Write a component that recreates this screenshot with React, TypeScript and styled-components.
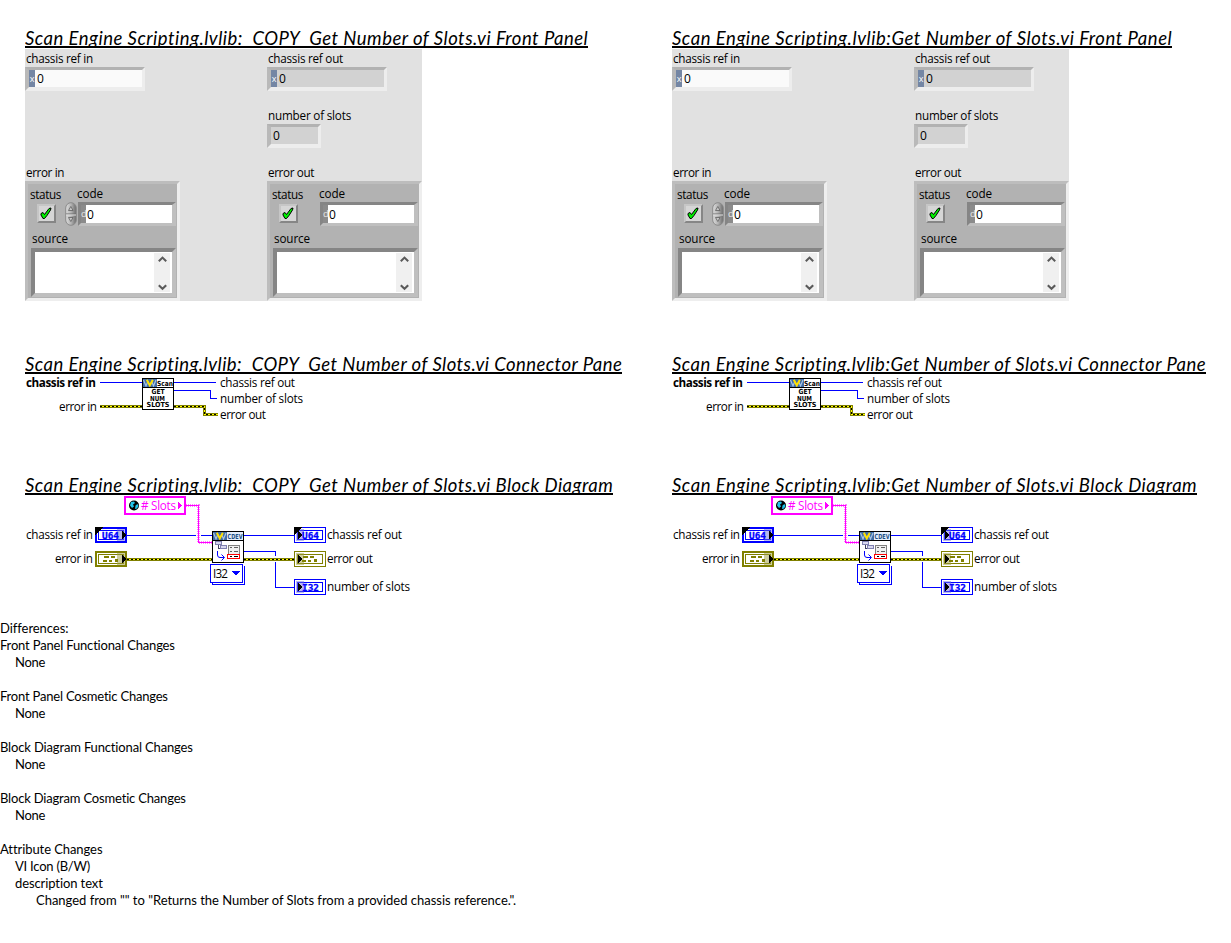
import React, { useLayoutEffect, useRef, useState } from "react";
import styled, { createGlobalStyle } from "styled-components";

const UI = '"Open Sans", "Noto Sans", sans-serif';
const DOC = 'Lato, "Open Sans", sans-serif';
const BLUE = "#0000ff";
const OLIVE = "#808000";
const PINK = "#ff00ff";

const GlobalStyle = createGlobalStyle`
  body { margin: 0; background: #fff; color: #000; }
  * { box-sizing: border-box; }
`;

const Page = styled.main`
  width: 1231px;
  height: 943px;
  overflow: hidden;
  background: #fff;
`;

const Columns = styled.div`
  display: grid;
  grid-template-columns: 647px 559px;
  padding: 27px 0 0 25px;
  height: 620px;
`;

const Section = styled.section<{ $height: number }>`
  height: ${(p) => p.$height}px;
`;

const Heading = styled.h2<{ $width: number }>`
  margin: 0 0 1px;
  width: ${(p) => p.$width}px;
  height: 21px;
  border-bottom: 2px solid #000;
  overflow: hidden;
  font: italic 400 18.5px/22px ${DOC};
`;

const Run = styled.span`
  display: inline-block;
  white-space: pre;
`;

/* Text whose tracking is adjusted so that it spans a given width. */
function FitText({ width, children }: { width: number; children: string }) {
  const ref = useRef<HTMLSpanElement>(null);
  const [spacing, setSpacing] = useState(0);
  useLayoutEffect(() => {
    if (ref.current) {
      const natural = ref.current.getBoundingClientRect().width;
      setSpacing((width - natural) / children.length);
    }
  }, [width, children]);
  return (
    <Run ref={ref} style={{ letterSpacing: `${spacing}px` }}>
      {children}
    </Run>
  );
}

/* ---------- Front panel ---------- */

const Panel = styled.div`
  display: grid;
  grid-template-columns: 242px 155px;
  width: 397px;
  height: 252px;
  background: #e1e1e1;
`;

const PanelColumn = styled.div`
  display: flex;
  flex-direction: column;
`;

const Label = styled.div`
  height: 18px;
  padding-left: 1px;
  font: 11.7px/18px ${UI};
`;

const Gap = styled.div<{ $size: number }>`
  height: ${(p) => p.$size}px;
`;

const Field = styled.div<{ $width: number; $indicator?: boolean }>`
  display: flex;
  width: ${(p) => p.$width}px;
  height: 24px;
  border-style: solid;
  border-width: 3px 3px 4px 4px;
  border-color: #b2b2b2 #ededed #ededed #b9b9b9;
  background: ${(p) => (p.$indicator ? "#d2d2d2" : "#fafafa")};
  font: 12px/17px ${UI};
`;

const Radix = styled.span`
  width: 6px;
  margin-right: 2px;
  background: #7486a4;
  color: #fff;
  font: 9px/18px ${UI};
  text-align: center;
`;

const Digit = styled.span<{ $pad?: number }>`
  padding-left: ${(p) => p.$pad ?? 0}px;
`;

const Cluster = styled.div`
  width: 155px;
  height: 120px;
  border: 3px solid;
  border-color: #bdbdbd #eeeeee #eeeeee #bdbdbd;
  background: #b2b2b2;
`;

const ClusterLabels = styled.div`
  display: grid;
  grid-template-columns: 47px 1fr;
  padding-left: 2px;
  height: 18px;
  font: 11.7px/18px ${UI};
`;

const StatusText = styled.span`
  padding-top: 1px;
`;

const CodeText = styled.span`
  white-space: nowrap;
`;

const ControlRow = styled.div`
  display: flex;
  align-items: center;
  height: 24px;
  padding-left: 9px;
`;

const StatusButton = styled.div`
  display: flex;
  width: 19px;
  height: 19px;
  margin: 0 9px 2px 0;
  border: 2px solid;
  border-color: #c6c6c6 #868686 #868686 #c6c6c6;
  background: #d6d6d6;
`;

const SpinnerSlot = styled.div`
  display: flex;
  width: 13px;
  height: 24px;
`;

const CodeField = styled.div`
  display: flex;
  width: 98px;
  height: 24px;
  border-style: solid;
  border-width: 3px 4px 3px 3px;
  border-color: #858585 #bfbfbf #bfbfbf #858585;
  background: #fff;
  font: 12px/19px ${UI};
`;

const Decimal = styled.span`
  width: 5px;
  background: #8b8b8b;
  color: #e8e8e8;
  font: 9.5px/18px ${UI};
`;

const SourceLabel = styled.div`
  height: 22px;
  padding-left: 4px;
  font: 11.7px/25px ${UI};
`;

const SourceBox = styled.div`
  display: flex;
  justify-content: flex-end;
  width: 145px;
  height: 49px;
  margin-left: 3px;
  padding: 1px 2px 1px 0;
  border: 4px solid;
  border-color: #858585 #bfbfbf #bfbfbf #858585;
  background: #fff;
`;

const ScrollBar = styled.div`
  display: flex;
  flex-direction: column;
  justify-content: space-between;
  align-items: center;
  width: 16px;
  padding: 3px 0 1px;
  background: #f0f0f0;
`;

const Chevron = ({ down }: { down?: boolean }) => (
  <svg width="9" height="7" viewBox="0 0 9 7">
    <path
      d={down ? "M0.8 1.2 4.5 4.8 8.2 1.2" : "M0.8 5.2 4.5 1.6 8.2 5.2"}
      fill="none"
      stroke="#5a5a5a"
      strokeWidth="2.1"
    />
  </svg>
);

const Check = () => (
  <svg width="15" height="15" viewBox="0.5 0 15 15">
    <path
      d="M2.5 7.5 4.5 6.5 6 8.5 10.5 2.5 12.5 2 12 4 8.5 9.5 6 12.5 4.5 12.5 2.5 9Z"
      fill="#00f000"
      stroke="#000"
      strokeWidth="1"
    />
  </svg>
);

const Spinner = () => (
  <svg width="12" height="24" viewBox="0 0 12 24">
    <defs>
      <linearGradient id="metal" x1="0" x2="1">
        <stop offset="0" stopColor="#dcdcdc" />
        <stop offset="0.5" stopColor="#b4b4b4" />
        <stop offset="1" stopColor="#6a6a6a" />
      </linearGradient>
    </defs>
    <rect x="0.7" y="0.7" width="10.6" height="22.6" rx="5.3" fill="url(#metal)" stroke="#8a8a8a" />
    <path d="M1 12h10" stroke="#707070" />
    <path d="M1 13h10" stroke="#e0e0e0" />
    <path d="M3.5 8.5 5.8 4.5 8 8.5Z" fill="#c8c8c8" stroke="#606060" strokeWidth="0.8" />
    <path d="M3.5 15.5 5.8 19.5 8 15.5Z" fill="#c8c8c8" stroke="#606060" strokeWidth="0.8" />
  </svg>
);

function ErrorCluster({ control }: { control?: boolean }) {
  return (
    <Cluster>
      <ClusterLabels>
        <StatusText>
          <FitText width={31}>status</FitText>
        </StatusText>
        <CodeText>
          <FitText width={26}>code</FitText>
        </CodeText>
      </ClusterLabels>
      <ControlRow>
        <StatusButton>
          <Check />
        </StatusButton>
        <SpinnerSlot>{control && <Spinner />}</SpinnerSlot>
        <CodeField>
          <Decimal>d</Decimal>
          <Digit $pad={1}>0</Digit>
        </CodeField>
      </ControlRow>
      <SourceLabel>
        <FitText width={36}>source</FitText>
      </SourceLabel>
      <SourceBox>
        <ScrollBar>
          <Chevron />
          <Chevron down />
        </ScrollBar>
      </SourceBox>
    </Cluster>
  );
}

function FrontPanel() {
  return (
    <Panel>
      <PanelColumn>
        <Label>
          <FitText width={67}>chassis ref in</FitText>
        </Label>
        <Field $width={120}>
          <Radix>x</Radix>
          <Digit>0</Digit>
        </Field>
        <Gap $size={72} />
        <Label>
          <FitText width={38}>error in</FitText>
        </Label>
        <ErrorCluster control />
      </PanelColumn>
      <PanelColumn>
        <Label>
          <FitText width={75}>chassis ref out</FitText>
        </Label>
        <Field $width={120} $indicator>
          <Radix>x</Radix>
          <Digit>0</Digit>
        </Field>
        <Gap $size={15} />
        <Label>
          <FitText width={83}>number of slots</FitText>
        </Label>
        <Field $width={54} $indicator>
          <Digit $pad={2}>0</Digit>
        </Field>
        <Gap $size={15} />
        <Label>
          <FitText width={46}>error out</FitText>
        </Label>
        <ErrorCluster />
      </PanelColumn>
    </Panel>
  );
}

/* ---------- Diagrams ---------- */

const Canvas = styled.svg`
  display: block;
  shape-rendering: crispEdges;
`;

const NodeText = styled.text<{ $bold?: boolean }>`
  font-family: ${UI};
  font-size: 11.7px;
  font-weight: ${(p) => (p.$bold ? 700 : 400)};
`;

const PixelText = styled.text`
  font-family: "DejaVu Sans", sans-serif;
  font-size: 7px;
  font-weight: 700;
`;

const TypeText = styled.text`
  font-family: "DejaVu Sans Mono", monospace;
  font-size: 9.5px;
  font-weight: 700;
  fill: ${BLUE};
  stroke: ${BLUE};
  stroke-width: 0.3px;
`;

const Wire = ({ d }: { d: string }) => <path d={d} fill="none" stroke={BLUE} />;

const ErrorWire = ({ d }: { d: string }) => (
  <>
    <path d={d} fill="none" stroke={OLIVE} strokeWidth="3" />
    <path d={d} fill="none" stroke="#ffff00" strokeWidth="1" />
    <path d={d} fill="none" stroke="#000" strokeWidth="1" strokeDasharray="2 2" />
  </>
);

/* Blue banner with the "W" logo across the top of a node icon. */
const Banner = ({ x, y }: { x: number; y: number }) => (
  <g shapeRendering="auto">
    <rect x={x} y={y} width="14" height="8" fill="#3f6ca6" />
    <path d={`M${x + 0.5} ${y + 1} l2.5 6 2 -5`} fill="none" stroke="#a9c4e4" strokeWidth="1.2" />
    <path d={`M${x + 8.5} ${y + 2} l2 5 2.5 -6`} fill="none" stroke="#a9c4e4" strokeWidth="1.2" />
    <path d={`M${x + 3.8} ${y + 0.8} l3 5.6 3 -5.6`} fill="none" stroke="#ffe100" strokeWidth="2" />
  </g>
);

function ConnectorPane() {
  return (
    <Canvas width="559" height="99" viewBox="25 375 559 99">
      <Wire d="M100 382.5H142" />
      <Wire d="M174 382.5H216" />
      <Wire d="M174 390.5H210.5V398.5H217" />
      <ErrorWire d="M100 406.5H142" />
      <ErrorWire d="M174 406.5H204.5V414.5H218" />
      <rect x="142.5" y="378.5" width="31" height="31" fill="#fff" stroke="#000" />
      <Banner x={143} y={379} />
      <path d="M143 387.5H173" stroke="#000" />
      <PixelText x="157" y="386" textLength="16" lengthAdjust="spacingAndGlyphs">Scan</PixelText>
      <PixelText x="151.5" y="394" textLength="13" lengthAdjust="spacingAndGlyphs">GET</PixelText>
      <PixelText x="150" y="401" textLength="15" lengthAdjust="spacingAndGlyphs">NUM</PixelText>
      <PixelText x="146.5" y="407" textLength="23" lengthAdjust="spacingAndGlyphs">SLOTS</PixelText>
      <NodeText x="26" y="387" $bold textLength="70">chassis ref in</NodeText>
      <NodeText x="59" y="411" textLength="38">error in</NodeText>
      <NodeText x="220" y="387" textLength="75">chassis ref out</NodeText>
      <NodeText x="220" y="403" textLength="83">number of slots</NodeText>
      <NodeText x="220" y="419" textLength="46">error out</NodeText>
    </Canvas>
  );
}

type TerminalProps = { x: number; y: number; kind: string; source?: boolean; required?: boolean };

function Terminal({ x, y, kind, source, required }: TerminalProps) {
  const isError = kind === "error";
  const color = isError ? OLIVE : BLUE;
  const w = source ? 2 : 1;
  return (
    <g>
      <rect x={x + w / 2} y={y + w / 2} width={32 - w} height={16 - w} fill="#fff" stroke={color} strokeWidth={w} />
      <rect x={x + 3.5} y={y + 3.5} width="25" height="9" fill="#fff" stroke={color} />
      <rect
        x={source ? x + 22 : x + 2}
        y={y + 2}
        width="8"
        height="12"
        fill={isError ? "#9c9c40" : "#7070e0"}
        opacity="0.5"
      />
      {isError ? (
        <g fill={color}>
          <rect x={x + 9} y={y + 5} width="5" height="2" />
          <rect x={x + 8} y={y + 9} width="4" height="2" />
          <rect x={x + 14} y={y + 9} width="3" height="2" />
          <rect x={x + 16} y={y + 5} width="4" height="2" />
          <rect x={x + 20} y={y + 8} width="3" height="3" />
        </g>
      ) : (
        <TypeText x={x + (source ? 7 : 8)} y={y + 11.5} textLength={17} lengthAdjust="spacingAndGlyphs">
          {kind}
        </TypeText>
      )}
      <path
        d={source ? `M${x + 27} ${y + 4}v8l4 -4z` : `M${x + 4} ${y + 4}v8l4 -4z`}
        fill="#000"
      />
      {required && <path d={`M${x} ${y}h8l-8 8z`} fill="#000" />}
    </g>
  );
}

function BlockDiagram() {
  return (
    <Canvas width="559" height="118" viewBox="25 496 559 118">
      <rect x="125" y="497" width="60" height="17" fill="#fff" stroke={PINK} strokeWidth="2" />
      <g shapeRendering="auto">
        <circle cx="134" cy="505.5" r="5" fill="#000" />
        <path d="M131 502l3 -0.5 1 1.5 -2 1.5 1 2 -2 1.5 -2 -2.5z M135.5 505.5l2 -1.5 1 2 -1.5 2.5 -2 0.5z" fill="#22c4ea" />
      </g>
      <NodeText x="141" y="510" fill={PINK} textLength="35">
        # Slots
      </NodeText>
      <path d="M178 502v7l4 -3.5z" fill={PINK} />

      <path d="M186 505.5H198.5V542.5H212" fill="none" stroke={PINK} strokeWidth="3" strokeDasharray="1 1" opacity="0.5" />
      <path d="M186 505.5H198.5V542.5H212" fill="none" stroke={PINK} strokeWidth="1" />
      <Wire d="M127 535.5H196M201 535.5H212" />
      <Wire d="M244 535.5H294" />
      <Wire d="M244 551.5H275.5V556M275.5 562V587.5H294" />
      <ErrorWire d="M127 559.5H212" />
      <ErrorWire d="M244 559.5H294" />

      <rect x="212.5" y="531.5" width="31" height="31" fill="#fff" stroke="#000" />
      <Banner x={213} y={532} />
      <rect x="227" y="532" width="16" height="8" fill="#e4eefb" />
      <path d="M213 540.5H243" stroke="#000" />
      <PixelText x="227.5" y="538.6" fill="#1c4f86" textLength="15" lengthAdjust="spacingAndGlyphs">
        CDEV
      </PixelText>
      <g fill="none">
        <path d="M218.5 545V548.5H221" stroke="#404060" />
        <rect x="215.5" y="541.5" width="6" height="3" fill="#d8d8ee" stroke="#8080b0" />
        <rect x="220.5" y="545.5" width="6" height="3" fill="#d8d8ee" stroke="#8080b0" />
        <path d="M217.5 551V555Q217.5 557.5 220 557.5H224M221.5 554.5L224.5 557.5L221.5 560.5" stroke={BLUE} shapeRendering="auto" />
        <rect x="228.5" y="545.5" width="11" height="13" fill="#f0f0f0" stroke="#808080" />
        <path d="M230 547.5h2M230 551.5h2M234 547.5h4M234 551.5h4" stroke="#606060" />
        <rect x="227.5" y="554.5" width="12" height="4" fill="#fff" stroke="#ff0000" />
        <path d="M230 556.5h2M234 556.5h4" stroke="#000" />
      </g>

      <path d="M244.5 567V584.5H213" fill="none" stroke={BLUE} />
      <rect x="210.5" y="564.5" width="32" height="18" fill="#fff" stroke={BLUE} />
      <path d="M243.5 566H245M212.5 583V585" stroke={BLUE} />
      <NodeText x="213" y="578" textLength="15">
        I32
      </NodeText>
      <path d="M232 571h8l-4 4.5z" fill={BLUE} />

      <Terminal x={95} y={527} kind="U64" source required />
      <Terminal x={95} y={551} kind="error" source />
      <Terminal x={294} y={527} kind="U64" required />
      <Terminal x={294} y={551} kind="error" />
      <Terminal x={294} y={579} kind="I32" />

      <NodeText x="26" y="539" textLength="67">chassis ref in</NodeText>
      <NodeText x="55" y="563" textLength="38">error in</NodeText>
      <NodeText x="327" y="539" textLength="75">chassis ref out</NodeText>
      <NodeText x="327" y="563" textLength="46">error out</NodeText>
      <NodeText x="327" y="591" textLength="83">number of slots</NodeText>
    </Canvas>
  );
}

/* ---------- Page ---------- */

function Report({ name, widths }: { name: string; widths: [number, number, number] }) {
  return (
    <div>
      <Section $height={326}>
        <Heading $width={widths[0]}>
          <FitText width={widths[0]}>{`${name} Front Panel`}</FitText>
        </Heading>
        <FrontPanel />
      </Section>
      <Section $height={121}>
        <Heading $width={widths[1]}>
          <FitText width={widths[1]}>{`${name} Connector Pane`}</FitText>
        </Heading>
        <ConnectorPane />
      </Section>
      <Section $height={146}>
        <Heading $width={widths[2]}>
          <FitText width={widths[2]}>{`${name} Block Diagram`}</FitText>
        </Heading>
        <BlockDiagram />
      </Section>
    </div>
  );
}

const Differences = styled.div`
  font: 13px/17px ${DOC};
`;

const Line = styled.div<{ $indent: number }>`
  height: 17px;
  padding-left: ${(p) => p.$indent}px;
`;

const differences: [string, number, number][] = [
  ["Differences:", 0, 68],
  ["Front Panel Functional Changes", 0, 175],
  ["None", 15, 30],
  ["", 0, 0],
  ["Front Panel Cosmetic Changes", 0, 168],
  ["None", 15, 30],
  ["", 0, 0],
  ["Block Diagram Functional Changes", 0, 193],
  ["None", 15, 30],
  ["", 0, 0],
  ["Block Diagram Cosmetic Changes", 0, 186],
  ["None", 15, 30],
  ["", 0, 0],
  ["Attribute Changes", 0, 102],
  ["VI Icon (B/W)", 15, 75],
  ["description text", 15, 88],
  ['Changed from "" to "Returns the Number of Slots from a provided chassis reference.".', 36, 480],
];

export default function App() {
  return (
    <Page>
      <GlobalStyle />
      <Columns>
        <Report name="Scan Engine Scripting.lvlib:  COPY  Get Number of Slots.vi" widths={[563, 597, 588]} />
        <Report name="Scan Engine Scripting.lvlib:Get Number of Slots.vi" widths={[500, 534, 525]} />
      </Columns>
      <Differences>
        {differences.map(([text, indent, width], i) => (
          <Line key={i} $indent={indent}>
            {text && <FitText width={width}>{text}</FitText>}
          </Line>
        ))}
      </Differences>
    </Page>
  );
}
